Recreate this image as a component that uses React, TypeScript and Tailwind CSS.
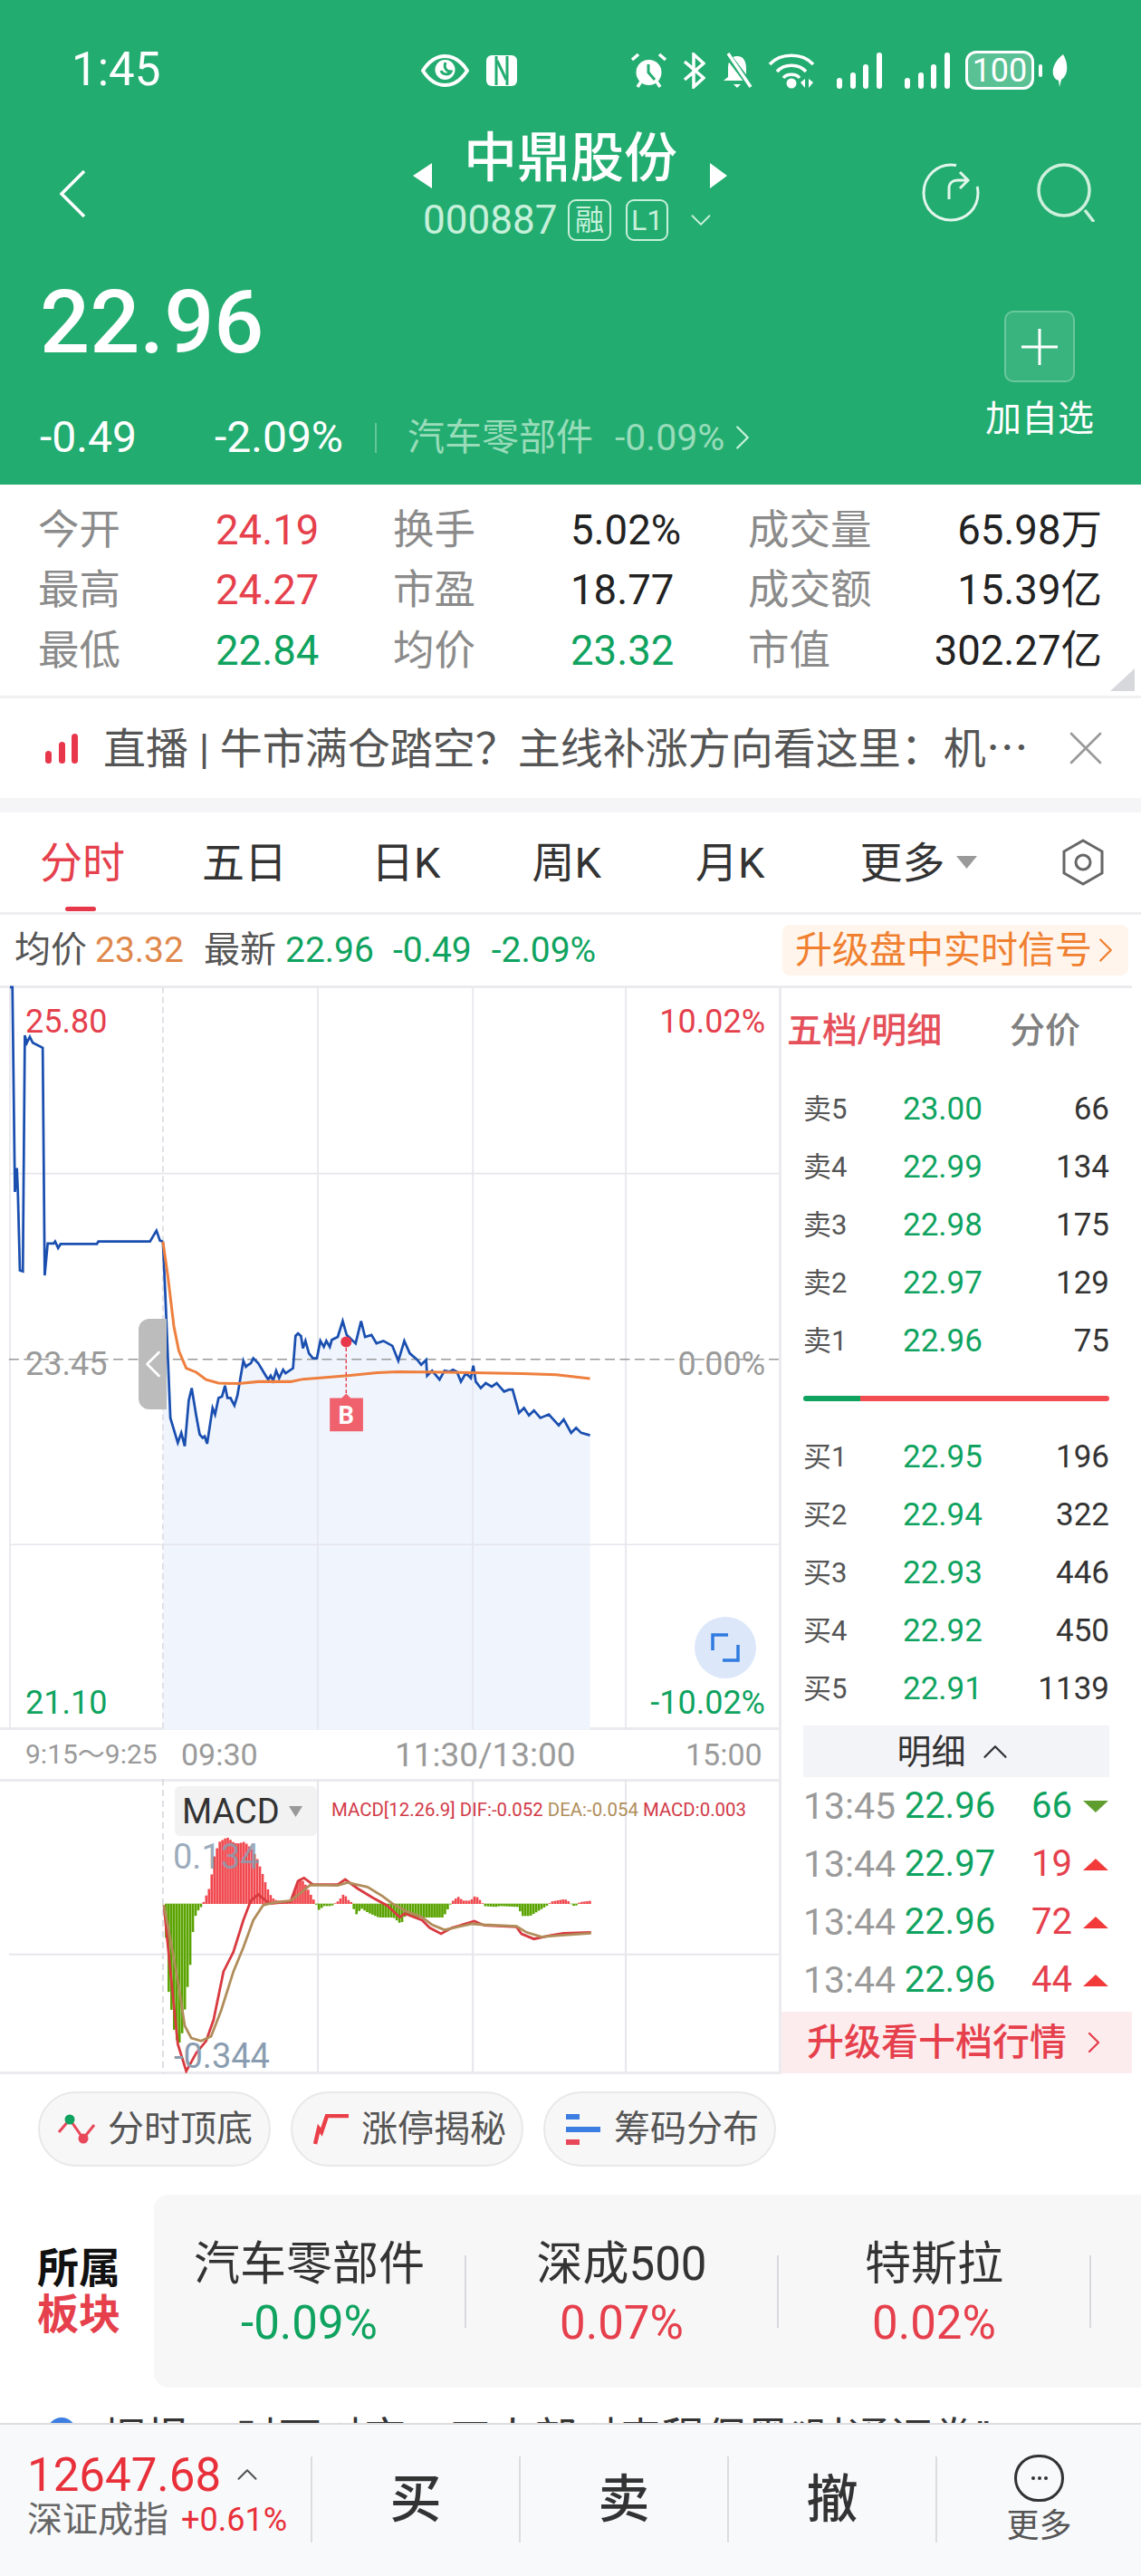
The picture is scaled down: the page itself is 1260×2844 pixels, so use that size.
import { ChevronLeft, ChevronRight, ChevronDown, ChevronUp, X } from 'lucide-react';

const GREEN = 'text-[#0fa35f]';
const RED = 'text-[#e5404c]';

// chart points are traced from the picture, in a 1568 wide space
const PRICE: number[][] = [
  [20, 18], [25, 18], [30, 430], [34, 382], [36, 430], [40, 588], [46, 590], [50, 115], [54, 130], [60, 118], [66, 130], [86, 140], [90, 598], [96, 534],
  [108, 534], [111, 530], [117, 543], [122, 535], [195, 535], [198, 530], [302, 530], [315, 508], [322, 528], [328, 530],
];
const PRICE_DAY: number[][] = [
  [328, 530], [333, 640], [343, 885], [358, 935], [365, 915], [372, 942], [380, 850], [386, 825], [395, 880], [402, 918], [408, 925], [412, 922], [417, 937],
  [428, 865], [433, 878], [440, 845], [447, 842], [453, 820], [458, 845], [464, 845], [472, 860], [478, 840], [490, 770], [495, 782], [500, 778], [505, 775],
  [510, 765], [520, 775], [535, 800], [540, 808], [545, 800], [550, 810], [556, 790], [562, 805], [570, 788], [575, 795], [590, 785], [595, 720], [600, 715],
  [606, 720], [610, 745], [615, 730], [622, 755], [630, 765], [638, 765], [645, 730], [652, 742], [657, 730], [664, 742], [668, 728], [680, 722], [690, 690],
  [698, 718], [716, 735], [727, 690], [735, 722], [748, 718], [758, 735], [772, 730], [790, 740], [802, 770], [814, 730], [825, 755], [840, 768], [848, 778],
  [858, 768], [860, 800], [870, 790], [885, 808], [895, 790], [905, 792], [912, 788], [920, 792], [928, 812], [938, 795], [948, 805], [953, 780], [958, 812],
  [968, 825], [978, 815], [990, 822], [1000, 815], [1015, 832], [1025, 828], [1032, 828], [1045, 875], [1055, 865], [1065, 880], [1075, 870], [1088, 885],
  [1105, 878], [1125, 900], [1135, 888], [1150, 915], [1160, 905], [1170, 915], [1188, 920],
];
const AVG: number[][] = [
  [328, 530], [338, 600], [350, 700], [360, 750], [375, 785], [395, 793], [415, 808], [440, 815], [480, 816], [520, 812], [585, 812], [610, 807], [650, 804],
  [700, 800], [760, 794], [800, 792], [900, 793], [1050, 796], [1120, 798], [1188, 806],
];
const DIF: number[][] = [
  [330, 550], [345, 800], [358, 1010], [375, 1100], [395, 1040], [415, 1000], [430, 930], [450, 770], [470, 705], [490, 600], [505, 535], [520, 515], [535, 535],
  [545, 545], [585, 538], [600, 470], [612, 460], [630, 482], [680, 482], [695, 465], [720, 495], [750, 525], [780, 552], [805, 590], [815, 578], [850, 600],
  [865, 625], [888, 645], [910, 625], [925, 618], [955, 603], [975, 617], [1040, 622], [1050, 645], [1075, 662], [1110, 650], [1135, 643], [1190, 640],
];
const DEA: number[][] = [
  [330, 550], [345, 680], [358, 800], [372, 950], [385, 990], [405, 1000], [425, 985], [445, 900], [470, 770], [490, 690], [510, 600], [530, 550], [550, 542],
  [585, 535], [605, 510], [625, 483], [680, 485], [700, 475], [740, 490], [770, 520], [790, 545], [815, 568], [850, 590], [870, 615], [895, 632], [950, 612],
  [975, 615], [1040, 620], [1060, 640], [1090, 655], [1130, 650], [1190, 643],
];
const HIST: number[][] = [
  [330, 555], [335, 810], [345, 920], [350, 985], [358, 1010], [365, 970], [372, 860], [380, 760], [385, 650], [390, 590], [395, 570], [405, 550], [410, 530],
  [420, 490], [430, 380], [440, 340], [455, 325], [470, 345], [480, 345], [490, 340], [505, 365], [515, 395], [525, 440], [535, 490], [545, 525], [555, 535],
  [585, 535], [595, 480], [603, 460], [612, 480], [625, 520], [632, 540], [640, 565], [650, 552], [665, 552], [680, 535], [690, 512], [700, 535], [705, 540],
  [708, 555], [715, 580], [725, 560], [740, 575], [760, 590], [790, 590], [805, 612], [815, 580], [840, 590], [890, 590], [900, 560], [905, 545], [910, 535],
  [920, 522], [930, 535], [945, 535], [955, 518], [968, 540], [972, 552], [995, 555], [1005, 552], [1040, 555], [1050, 585], [1065, 585], [1085, 565], [1100, 550],
  [1108, 538], [1135, 530], [1145, 540], [1150, 552], [1158, 550], [1165, 540], [1190, 535],
];

function line(pts: number[][]) {
  return pts.map((p) => p.join(',')).join(' ');
}

function histAt(x: number) {
  for (let i = 1; i < HIST.length; i++) {
    if (x <= HIST[i][0]) {
      const [x0, y0] = HIST[i - 1];
      const [x1, y1] = HIST[i];
      return y0 + ((y1 - y0) * (x - x0)) / (x1 - x0);
    }
  }
  return 545;
}

const BARS: number[] = [];
for (let x = 332; x <= 1190; x += 5.4) BARS.push(x);

function PriceChart() {
  return (
    <svg viewBox="0 14.600 1568 1498.600" className="absolute -top-[3px] left-0 h-[822px] w-[860px]">
      <polygon points={`${line(PRICE_DAY)} 1188,1513 328,1513`} fill="#eff4fd" />
      {[640, 952, 1260].map((x) => (
        <line key={x} x1={x} x2={x} y1={18} y2={1513} stroke="#e6e6ec" strokeWidth="3" />
      ))}
      {[393, 1140].map((y) => (
        <line key={y} x1={20} x2={1568} y1={y} y2={y} stroke="#e6e6ec" strokeWidth="3" />
      ))}
      <line x1={20} x2={20} y1={18} y2={1513} stroke="#e6e6ec" strokeWidth="3" />
      <line x1={328} x2={328} y1={18} y2={1513} stroke="#dcdce2" strokeWidth="3" strokeDasharray="12 8" />
      <line x1={18} x2={1568} y1={767} y2={767} stroke="#9a9a9a" strokeWidth="3" strokeDasharray="20 10" />
      <polyline points={line(PRICE)} fill="none" stroke="#1a4fb0" strokeWidth="5" />
      <polyline points={line(PRICE_DAY)} fill="none" stroke="#1a4fb0" strokeWidth="5" />
      <polyline points={line(AVG)} fill="none" stroke="#ee7f3e" strokeWidth="5.500" />
      <line x1={697} x2={697} y1={732} y2={840} stroke="#e8374a" strokeWidth="2.500" strokeDasharray="7 5" />
      <circle cx={697} cy={732} r={11} fill="#e8374a" />
      <path d="M664 845H688L697 836L706 845H731V912H664Z" fill="#f0616e" />
      <text x={697} y={897} textAnchor="middle" fontSize="50" fontWeight="700" fill="#fff">B</text>
    </svg>
  );
}

function MacdChart() {
  return (
    <svg viewBox="0 132 1568 975" preserveAspectRatio="none" className="absolute -top-[3px] left-0 h-[325px] w-[860px]">
      {[640, 952, 1260].map((x) => (
        <line key={x} x1={x} x2={x} y1={132} y2={1107} stroke="#e6e6ec" strokeWidth="2" vectorEffect="non-scaling-stroke" />
      ))}
      <line x1={328} x2={328} y1={132} y2={1107} stroke="#dcdce2" strokeWidth="2" strokeDasharray="7 5" vectorEffect="non-scaling-stroke" />
      <line x1={18} x2={1568} y1={713} y2={713} stroke="#e6e6ec" strokeWidth="2" vectorEffect="non-scaling-stroke" />
      {BARS.map((x) => {
        const y = histAt(x);
        return (
          <rect key={x} x={x} width={4.800} y={Math.min(y, 545)} height={Math.abs(y - 545) + 1} fill={y > 545 ? '#5aa300' : '#f0484e'} />
        );
      })}
      <polyline points={line(DIF)} fill="none" stroke="#d83a40" strokeWidth="2.800" vectorEffect="non-scaling-stroke" />
      <polyline points={line(DEA)} fill="none" stroke="#b08d5a" strokeWidth="2.800" vectorEffect="non-scaling-stroke" />
    </svg>
  );
}

function StatusIcons() {
  return (
    <div className="flex items-center text-white">
      <svg viewBox="0 0 53 36" className="h-[36px] w-[53px]" fill="none">
        <path d="M2 18C9 7 17 2 26.500 2S44 7 51 18C44 29 36 34 26.500 34S9 29 2 18Z" stroke="#fff" strokeWidth="4" />
        <circle cx="26.500" cy="17" r="11" fill="#fff" />
        <path d="M27 9C25 14 27 19 33 19C31 23 24 23 22 18" stroke="#23ac70" strokeWidth="3" />
      </svg>
      <svg viewBox="0 0 36 36" className="ml-[18px] h-[36px] w-[36px]" fill="none">
        <rect x="1" y="1" width="34" height="34" rx="6" fill="#fff" />
        <path d="M12 2V34M24 2V34" stroke="#23ac70" strokeWidth="3" />
        <path d="M13 7L23 28" stroke="#23ac70" strokeWidth="3" />
      </svg>
      <svg viewBox="0 0 41 40" className="ml-[124px] h-[40px] w-[41px]" fill="none">
        <circle cx="20.500" cy="22" r="14" fill="#fff" />
        <path d="M20 13V22L27 30" stroke="#23ac70" strokeWidth="3" />
        <path d="M2 8L9 2M39 8L32 2M8 38L12 32M33 38L29 32" stroke="#fff" strokeWidth="3.500" />
      </svg>
      <svg viewBox="0 0 25 40" className="ml-[17px] h-[40px] w-[25px]" fill="none">
        <path d="M2 10L23 28L12 38V2L23 12L2 30" stroke="#fff" strokeWidth="3.500" />
      </svg>
      <svg viewBox="0 0 36 40" className="ml-[17px] h-[40px] w-[36px]" fill="none">
        <path d="M18 4C10 4 8 11 8 18V27L3 31H33L28 27V18C28 11 26 4 18 4Z" fill="#fff" />
        <path d="M14 35H22L18 39Z" fill="#fff" />
        <path d="M6 1L34 38" stroke="#23ac70" strokeWidth="7" />
        <path d="M8 1L33 38" stroke="#fff" strokeWidth="3.500" />
      </svg>
      <svg viewBox="0 0 52 40" className="ml-[16px] h-[40px] w-[52px]" fill="none">
        <path d="M2 13C14 0 38 0 50 13M10 21C18 12 34 12 42 21M17 28C21 23 31 23 35 28" stroke="#fff" strokeWidth="3.500" />
        <circle cx="26" cy="34" r="5.500" fill="#fff" />
        <path d="M36 33L41 29V39ZM45 29L50 33L45 39Z" fill="#fff" />
      </svg>
      <Signal className="ml-[24px]" />
      <Signal className="ml-[25px]" />
      <div className="ml-[17px] flex h-[43px] w-[76px] items-center justify-center rounded-[12px] border-[3px] border-white bg-white/25 text-[36px] leading-none">100</div>
      <div className="ml-[5px] h-[14px] w-[4px] rounded-full bg-white" />
      <svg viewBox="0 0 19 36" className="ml-[10px] h-[36px] w-[19px]">
        <path d="M13 0C18 8 20 22 11 28L9 36L8 29C-2 25 0 10 13 0Z" fill="#fff" />
      </svg>
    </div>
  );
}

function Signal({ className }: { className?: string }) {
  return (
    <div className={`flex h-[40px] w-[50px] items-end justify-between ${className}`}>
      <div className="h-[12px] w-[6px] rounded-full bg-white" />
      <div className="h-[18px] w-[6px] rounded-full bg-white" />
      <div className="h-[27px] w-[6px] rounded-full bg-white" />
      <div className="h-[40px] w-[6px] rounded-full bg-white" />
    </div>
  );
}

function Header() {
  return (
    <div className="h-[535px] shrink-0 bg-[#23ac70] text-white">
      <div className="flex h-[101px] items-end pb-[2px]">
        <div className="h-[44px] w-[465px] pl-[79px] text-[51px] leading-[44px]">1:45</div>
        <StatusIcons />
      </div>

      <div className="mt-[46px] flex h-[120px] items-start">
        <svg viewBox="0 0 29 52" className="ml-[66px] mt-[41px] h-[52px] w-[29px] shrink-0" fill="none" stroke="#fff" strokeWidth="3.500">
          <path d="M27 1L2 26L27 51" />
        </svg>
        <div className="ml-[361px] w-[347px] shrink-0">
          <div className="flex h-[73px] items-start">
            <svg viewBox="0 0 21 28" className="mt-[33px] h-[28px] w-[21px]"><path d="M21 0V28L0 14Z" fill="#fff" /></svg>
            <div className="ml-[35px] h-[56px] w-[240px] whitespace-nowrap text-[59px] font-medium leading-[56px]">中鼎股份</div>
            <svg viewBox="0 0 19 28" className="ml-[32px] mt-[33px] h-[28px] w-[19px]"><path d="M0 0V28L19 14Z" fill="#fff" /></svg>
          </div>
          <div className="ml-[11px] flex h-[46px] items-center text-[#c6f0da]">
            <span className="w-[160px] text-[44px] leading-none">000887</span>
            <span className="flex h-[46px] w-[48px] items-center justify-center rounded-[9px] border-2 border-[#c6f0da] text-[32px] leading-none">融</span>
            <span className="ml-[16px] flex h-[46px] w-[47px] items-center justify-center rounded-[9px] border-2 border-[#c6f0da] text-[32px] leading-none">L1</span>
            <ChevronDown strokeWidth={1.2} className="ml-[17px] h-[38px] w-[38px]" />
          </div>
        </div>
        <svg viewBox="0 0 64 65" className="ml-[215px] mt-[33px] h-[65px] w-[64px]" fill="none" stroke="#e2f6ec" strokeWidth="3">
          <path d="M38 2.500C18 -1 2 14 2 33C2 50 15 63 32 63C49 63 62 50 62 33C62 30 62 28 61 26" />
          <path d="M30 40V28C30 22 34 19 39 19H50M42 10L51 19L42 28" />
        </svg>
        <svg viewBox="0 0 64 65" className="ml-[63px] mt-[33px] h-[65px] w-[64px]" fill="none" stroke="#cdf0dd" strokeWidth="3.500">
          <circle cx="30" cy="30" r="28" />
          <path d="M53 52L63 65" />
        </svg>
      </div>

      <div className="flex justify-between pr-[52px]">
        <div className="pl-[44px]">
          <div className="mt-[41px] h-[96px] text-[97px] font-medium leading-[96px]">22.96</div>
          <div className="mt-[59px] flex h-[40px] items-center leading-none">
            <span className="w-[193px] text-[48px]">-0.49</span>
            <span className="w-[177px] text-[48px]">-2.09%</span>
            <span className="h-[33px] w-[2px] bg-white/30" />
            <span className="ml-[34px] w-[229px] text-[41px] text-[#98dcba]">汽车零部件</span>
            <span className="w-[134px] text-[41px] text-[#98dcba]">-0.09%</span>
            <ChevronRight strokeWidth={1.2} className="-ml-[16px] h-[46px] w-[46px] text-[#c6f0da]" />
          </div>
        </div>
        <div className="flex w-[120px] flex-col items-center">
          <div className="mt-[76px] flex h-[79px] w-[78px] items-center justify-center rounded-[10px] border-2 border-white/25 bg-white/10">
            <svg viewBox="0 0 40 40" className="h-[40px] w-[40px]" stroke="#fff" strokeWidth="3"><path d="M0 20H40M20 0V40" /></svg>
          </div>
          <div className="mt-[21px] h-[40px] text-[40px] leading-[40px]">加自选</div>
        </div>
      </div>
    </div>
  );
}

const STATS = [
  ['今开', '24.19', RED, '换手', '5.02%', 'text-[#222]', '成交量', '65.98万'],
  ['最高', '24.27', RED, '市盈', '18.77', 'text-[#222]', '成交额', '15.39亿'],
  ['最低', '22.84', GREEN, '均价', '23.32', GREEN, '市值', '302.27亿'],
];

function Stats() {
  return (
    <div className="relative h-[236px] shrink-0 border-b-[3px] border-[#f0f0f2] pt-[17px]">
      {STATS.map((r) => (
        <div key={r[0]} className="grid h-[66.500px] grid-cols-[196px_196px_196px_196px_1fr] items-center pl-[42px] pr-[43px] text-[45.500px] leading-none">
          <span className="text-[#8b8b8b]">{r[0]}</span>
          <span className={r[2]}>{r[1]}</span>
          <span className="text-[#8b8b8b]">{r[3]}</span>
          <span className={r[5]}>{r[4]}</span>
          <div className="flex items-center justify-between">
            <span className="text-[#8b8b8b]">{r[6]}</span>
            <span className="text-[#222]">{r[7]}</span>
          </div>
        </div>
      ))}
      <svg viewBox="0 0 27 25" className="absolute bottom-[5px] right-[7px] h-[25px] w-[27px]"><path d="M27 0V25H0Z" fill="#d6d8db" /></svg>
    </div>
  );
}

function Banner() {
  return (
    <div className="flex h-[110px] shrink-0 items-center pl-[50px]">
      <div className="flex h-[33px] w-[36px] items-end justify-between">
        <div className="h-[14px] w-[7px] rounded-full bg-[#e8374a]" />
        <div className="h-[24px] w-[7px] rounded-full bg-[#e8374a]" />
        <div className="h-[33px] w-[7px] rounded-full bg-[#e8374a]" />
      </div>
      <div className="ml-[28px] w-[1030px] whitespace-nowrap text-[47px] leading-none text-[#555]">直播 | 牛市满仓踏空？主线补涨方向看这里：机⋯</div>
      <X strokeWidth={1} className="ml-[23px] h-[64px] w-[64px] text-[#999]" />
    </div>
  );
}

function Tabs() {
  const tabs = [
    { t: '五日', w: 'ml-[85px]' },
    { t: '日K', w: 'ml-[93px]' },
    { t: '周K', w: 'ml-[101px]' },
    { t: '月K', w: 'ml-[104px]' },
    { t: '更多', w: 'ml-[105px]' },
  ];
  return (
    <div className="relative flex h-[113px] shrink-0 items-center border-b-[3px] border-[#eeeef0] pl-[44px] text-[47px] leading-none text-[#333]">
      <span className={RED}>分时</span>
      {tabs.map((x) => (
        <span key={x.t} className={x.w}>{x.t}</span>
      ))}
      <svg viewBox="0 0 23 14" className="ml-[12px] h-[14px] w-[23px]"><path d="M0 0H23L11.500 14Z" fill="#9a9a9a" /></svg>
      <svg viewBox="0 0 46 52" className="ml-[94px] h-[52px] w-[46px]" fill="none" stroke="#666" strokeWidth="3">
        <path d="M23 2L44 14V38L23 50L2 38V14Z" />
        <circle cx="23" cy="26" r="8" />
      </svg>
      <div className="absolute bottom-[1px] left-[72px] h-[5px] w-[34px] rounded-full bg-[#e8374a]" />
    </div>
  );
}

function InfoRow() {
  return (
    <div className="flex h-[78px] shrink-0 items-center justify-between pl-[16px] pr-[14px] leading-none">
      <div className="flex items-center text-[39px]">
        <span className="text-[40px] text-[#555]">均价</span>
        <span className="ml-[9px] text-[#e0874a]">23.32</span>
        <span className="ml-[22px] text-[40px] text-[#555]">最新</span>
        <span className={`ml-[10px] ${GREEN}`}>22.96</span>
        <span className={`ml-[21px] ${GREEN}`}>-0.49</span>
        <span className={`ml-[22px] ${GREEN}`}>-2.09%</span>
      </div>
      <div className="flex h-[56px] w-[382px] items-center whitespace-nowrap rounded-[8px] bg-[#fff5ec] pl-[14px] text-[41px] text-[#f08030]">
        升级盘中实时信号
        <ChevronRight strokeWidth={1.2} className="-ml-[8px] h-[46px] w-[46px] shrink-0" />
      </div>
    </div>
  );
}

function Quote({ label, price, qty }: { label: string; price: string; qty: string }) {
  return (
    <div className="grid h-[64px] grid-cols-[110px_1fr_auto] items-center text-[35px] leading-none">
      <span className="text-[31px] text-[#555]">{label}</span>
      <span className={GREEN}>{price}</span>
      <span className="text-[#333]">{qty}</span>
    </div>
  );
}

function Tick({ time, price, qty, up }: { time: string; price: string; qty: string; up: boolean }) {
  return (
    <div className="flex h-[64px] items-center text-[40px] leading-none">
      <span className="w-[112px] text-[41px] text-[#9a9a9a]">{time}</span>
      <span className={`w-[136px] ${GREEN}`}>{price}</span>
      <span className={`w-[50px] text-right ${up ? RED : GREEN}`}>{qty}</span>
      <svg viewBox="0 0 30 14" className="ml-[11px] h-[13px] w-[30px]">
        {up ? <path d="M0 14H30L15 0Z" fill="#f23a3a" /> : <path d="M0 0H30L15 14Z" fill="#5f9e2e" />}
      </svg>
    </div>
  );
}

function SidePanel() {
  return (
    <div className="w-[387px] shrink-0 border-t-[3px] border-[#ebebef]">
      <div className="flex h-[101px] items-center pb-[6px] pl-[6px] text-[39px] font-medium leading-none">
        <span className="w-[246px] text-[#e5505a]">五档/明细</span>
        <span className="text-[#808080]">分价</span>
      </div>
      <div className="ml-[24px] w-[338px]">
        <Quote label="卖5" price="23.00" qty="66" />
        <Quote label="卖4" price="22.99" qty="134" />
        <Quote label="卖3" price="22.98" qty="175" />
        <Quote label="卖2" price="22.97" qty="129" />
        <Quote label="卖1" price="22.96" qty="75" />
        <div className="mb-[29px] mt-[29px] flex h-[6px] overflow-hidden rounded-full">
          <div className="w-[63px] bg-[#0fa35f]" />
          <div className="flex-1 bg-[#f24e52]" />
        </div>
        <Quote label="买1" price="22.95" qty="196" />
        <Quote label="买2" price="22.94" qty="322" />
        <Quote label="买3" price="22.93" qty="446" />
        <Quote label="买4" price="22.92" qty="450" />
        <Quote label="买5" price="22.91" qty="1139" />
        <div className="mt-[9px] flex h-[57px] items-center justify-center bg-[#f3f4f8] text-[38px] leading-none text-[#333]">
          明细
          <ChevronUp strokeWidth={1.2} className="ml-[9px] h-[46px] w-[46px]" />
        </div>
        <Tick time="13:45" price="22.96" qty="66" up={false} />
        <Tick time="13:44" price="22.97" qty="19" up />
        <Tick time="13:44" price="22.96" qty="72" up />
        <Tick time="13:44" price="22.96" qty="44" up />
      </div>
      <div className="mt-[3px] flex h-[68px] items-center justify-between bg-[#fdecee] pl-[28px] pr-[22px] text-[41px] font-medium leading-none text-[#e5404c]">
        升级看十档行情
        <ChevronRight strokeWidth={1.4} className="h-[40px] w-[40px]" />
      </div>
    </div>
  );
}

function ChartColumn() {
  return (
    <div className="w-[863px] shrink-0 border-r-[3px] border-[#ebebef]">
      <div className="relative h-[822px] border-y-[3px] border-[#ebebef]">
        <PriceChart />
        <span className={`absolute left-[28px] top-[19px] text-[36px] leading-none ${RED}`}>25.80</span>
        <span className={`absolute right-[15px] top-[19px] text-[36px] leading-none ${RED}`}>10.02%</span>
        <span className="absolute left-[28px] top-[397px] text-[36px] leading-none text-[#9a9a9a]">23.45</span>
        <span className="absolute right-[15px] top-[397px] text-[36px] leading-none text-[#9a9a9a]">0.00%</span>
        <span className={`absolute bottom-[9px] left-[28px] text-[36px] leading-none ${GREEN}`}>21.10</span>
        <span className={`absolute bottom-[9px] right-[15px] text-[36px] leading-none ${GREEN}`}>-10.02%</span>
        <div className="absolute left-[153px] top-[365px] flex h-[100px] w-[31px] items-center justify-center rounded-l-[12px] bg-[#bcbcbc]">
          <ChevronLeft strokeWidth={1.2} className="h-[52px] w-[52px] shrink-0 text-white" />
        </div>
        <div className="absolute left-[767px] top-[694px] flex h-[68px] w-[68px] items-center justify-center rounded-full bg-[#dce7fa]">
          <svg viewBox="0 0 32 32" className="h-[32px] w-[32px]" fill="none" stroke="#2f7be0" strokeWidth="3.500">
            <path d="M2 19V2H19M30 13V30H13" />
          </svg>
        </div>
      </div>
      <div className="flex h-[54px] items-center text-[#9a9a9a]">
        <span className="ml-[28px] w-[172px] text-[30px] leading-none">9:15～9:25</span>
        <span className="w-[236px] text-[34px] leading-none">09:30</span>
        <span className="w-[321px] text-[37px] leading-none">11:30/13:00</span>
        <span className="text-[34px] leading-none">15:00</span>
      </div>
      <div className="relative h-[326px] border-y-[3px] border-[#ebebef]">
        <MacdChart />
        <div className="absolute left-[193px] top-[5px] flex h-[55px] w-[157px] items-center rounded-[6px] bg-[#f2f2f2] pl-[8px] text-[38px] leading-none text-[#333]">
          MACD
          <svg viewBox="0 0 15 12" className="ml-[10px] h-[12px] w-[15px]"><path d="M0 0H15L7.500 12Z" fill="#999" /></svg>
        </div>
        <div className="absolute left-[366px] top-[21px] whitespace-nowrap text-[20.400px] leading-none">
          <span className="text-[#d23a48]">MACD[12.26.9] DIF:-0.052 </span>
          <span className="text-[#b08d5a]">DEA:-0.054 </span>
          <span className="text-[#d23a48]">MACD:0.003</span>
        </div>
        <span className="absolute left-[191px] top-[64px] text-[38px] leading-none text-[#8a9db0]/85">0.134</span>
        <span className="absolute left-[192px] top-[284px] text-[38px] leading-none text-[#8a9db0]">-0.344</span>
      </div>
    </div>
  );
}

function Chips() {
  return (
    <div className="mt-[19px] flex h-[83px] shrink-0 gap-[22px] pl-[42px] text-[40px] leading-none text-[#555]">
      <div className="flex w-[257px] items-center rounded-full border-2 border-[#e8e8e8] bg-[#f7f7f7] pl-[19px]">
        <svg viewBox="0 0 43 34" className="h-[34px] w-[43px]" fill="none">
          <path d="M2 20L14 6L29 27L41 12" stroke="#e8485a" strokeWidth="3" />
          <circle cx="14" cy="6" r="5.500" fill="#0fa35f" />
          <circle cx="29" cy="27" r="5.500" fill="#e8485a" />
        </svg>
        <span className="ml-[13px]">分时顶底</span>
      </div>
      <div className="flex w-[257px] items-center rounded-full border-2 border-[#e8e8e8] bg-[#f7f7f7] pl-[23px]">
        <svg viewBox="0 0 40 34" className="h-[34px] w-[40px]" fill="none">
          <path d="M2 33L6 16L9 20L15 2H39" stroke="#ea3f48" strokeWidth="4.500" />
        </svg>
        <span className="ml-[13px]">涨停揭秘</span>
      </div>
      <div className="flex w-[257px] items-center rounded-full border-2 border-[#e8e8e8] bg-[#f7f7f7] pl-[23px]">
        <div className="w-[38px]">
          <div className="h-[6px] w-[15px] bg-[#3b7de0]" />
          <div className="mt-[8px] h-[6px] w-[38px] bg-[#3b7de0]" />
          <div className="mt-[8px] h-[6px] w-[15px] bg-[#e8485a]" />
        </div>
        <span className="ml-[15px]">筹码分布</span>
      </div>
    </div>
  );
}

function Plate() {
  const items = [
    { name: '汽车零部件', pct: '-0.09%', color: GREEN },
    { name: '深成500', pct: '0.07%', color: RED },
    { name: '特斯拉', pct: '0.02%', color: RED },
  ];
  return (
    <div className="mt-[31px] flex h-[213px] shrink-0 items-center">
      <div className="w-[170px] pl-[41px] text-[46px] font-bold leading-[51px] text-[#111]">
        <div>所属</div>
        <div className={RED}>板块</div>
      </div>
      <div className="flex h-[213px] flex-1 items-center rounded-l-[16px] bg-[#f7f7f8]">
        {items.map((it) => (
          <div key={it.name} className="flex w-[345px] items-center">
            <div className="flex flex-1 flex-col items-center pt-[6px] leading-none">
              <div className="h-[50px] text-[51px] leading-[50px] text-[#333]">{it.name}</div>
              <div className={`mt-[15px] h-[50px] text-[51px] leading-[50px] ${it.color}`}>{it.pct}</div>
            </div>
            <div className="h-[80px] w-[2px] bg-[#d9d9dd]" />
          </div>
        ))}
      </div>
    </div>
  );
}

function BottomNav() {
  return (
    <div className="flex h-[169px] shrink-0 items-start border-t-2 border-[#dddddf] bg-[#f8f9fb] pt-[35px]">
      <div className="h-[95px] w-[343px] pl-[30px]">
        <div className="-mt-[5px] flex h-[50px] items-center">
          <span className="text-[51px] leading-none text-[#e8303a]">12647.68</span>
          <ChevronUp strokeWidth={1.3} className="ml-[10px] h-[38px] w-[38px] text-[#555]" />
        </div>
        <div className="mt-[5px] flex h-[40px] items-center leading-none">
          <span className="text-[39px] text-[#666]">深证成指</span>
          <span className="ml-[14px] text-[36px] text-[#e8303a]">+0.61%</span>
        </div>
      </div>
      {['买', '卖', '撤'].map((t) => (
        <div key={t} className="flex h-[95px] w-[230px] items-center justify-center border-l-2 border-[#dddde0] text-[57px] font-medium leading-none text-[#333]">
          {t}
        </div>
      ))}
      <div className="flex h-[95px] flex-1 flex-col items-center border-l-2 border-[#dddde0]">
        <div className="-mt-[2px] flex h-[55px] w-[55px] items-center justify-center gap-[3px] rounded-full border-[3px] border-[#333]">
          <div className="h-[4px] w-[4px] rounded-full bg-[#333]" />
          <div className="h-[4px] w-[4px] rounded-full bg-[#333]" />
          <div className="h-[4px] w-[4px] rounded-full bg-[#333]" />
        </div>
        <div className="mt-[9px] text-[36px] leading-none text-[#555]">更多</div>
      </div>
    </div>
  );
}

export default function App() {
  return (
    <div className="flex h-[2844px] w-[1260px] flex-col overflow-hidden bg-white font-[family-name:Roboto,'Noto_Sans_CJK_SC',sans-serif]">
      <div className="min-h-0 flex-1 overflow-hidden">
        <Header />
        <Stats />
        <Banner />
        <div className="h-[16px] bg-[#f5f5f7]" />
        <Tabs />
        <InfoRow />
        <div className="flex h-[1202px]">
          <ChartColumn />
          <SidePanel />
        </div>
        <Chips />
        <Plate />
        <div className="mt-[32px] flex items-start pl-[52px] text-[47px] leading-none text-[#333]">
          <div className="mt-[1px] h-[32px] w-[32px] rounded-full bg-[#3b7de0]" />
          <div className="ml-[30px] whitespace-nowrap">据报10时下对空，工人部对来程保黑“财通证券”</div>
        </div>
      </div>
      <BottomNav />
    </div>
  );
}
